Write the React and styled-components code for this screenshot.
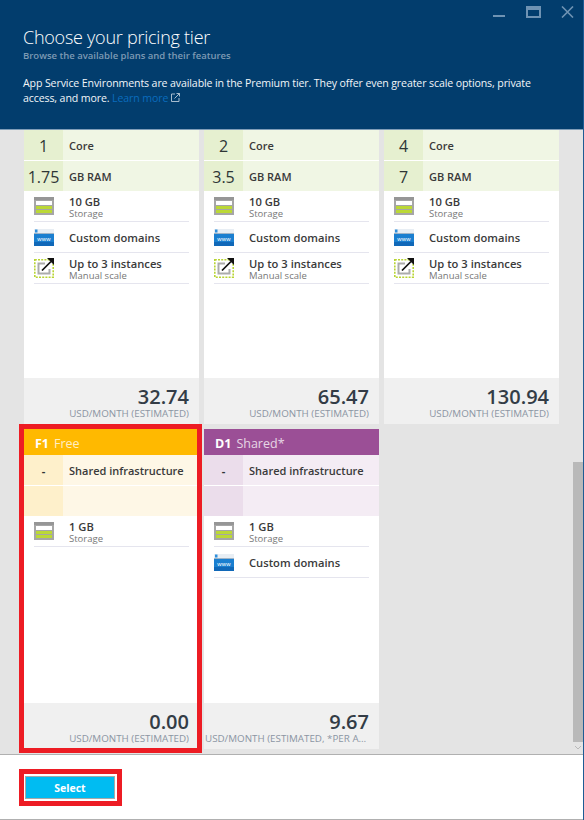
import React from "react";
import styled, { createGlobalStyle } from "styled-components";

const Global = createGlobalStyle`
  html, body { margin: 0; padding: 0; background: #fff; }
  body { font-family: "Open Sans", "Noto Sans", "Liberation Sans", sans-serif; }
  * { box-sizing: border-box; }
`;

const Blade = styled.div`
  width: 584px; height: 820px; display: flex; flex-direction: column; overflow: hidden;
  border-right: 1px solid #1e5c94;
`;
const Header = styled.header`
  position: relative; height: 130px; flex: none; background: #023d6d; padding: 24px 23px 0; color: #fff;
  border-bottom: 1px solid #7f9db8;
`;
const Title = styled.h1`
  margin: 0; font-size: 18px; line-height: 26px; font-weight: 300; color: #fff; letter-spacing: -0.25px;
`;
const Subtitle = styled.div`
  font-size: 9.5px; line-height: 12px; color: #7d9ab4; font-weight: 600;
`;
const Intro = styled.p`
  margin: 14px 0 0; font-size: 10.6px; line-height: 14.5px; width: 530px; color: #f2f6f9; letter-spacing: -0.12px;
`;
const LearnMore = styled.a`color: #0a6cbd; text-decoration: none;`;
const Controls = styled.div`
  position: absolute; top: 6px; right: 9px; display: flex; gap: 20px; align-items: flex-start;
`;
const Body = styled.main`
  position: relative; flex: 1; min-height: 0; background: #e4e4e4; overflow: hidden; padding-left: 24px;
`;
const Grid = styled.div`
  display: grid; grid-template-columns: repeat(3, 175px); grid-template-rows: 294px 320px; gap: 5px;
`;
const Card = styled.section`
  position: relative; display: flex; flex-direction: column; background: #fff;
`;
const Highlight = styled.div`
  position: absolute; inset: -5px -3px -4px -5px; border: 5px solid #ed1c24; pointer-events: none;
`;
const TierBar = styled.div`
  height: 26px; background: ${p => p.$bg}; color: #fff; padding: 2px 0 0 11px; display: flex; align-items: center;
  gap: 5px; font-size: 12.5px;
`;
const TierCode = styled.b`font-weight: 700;`;
const TierName = styled.span`opacity: .76;`;
const SpecRow = styled.div`
  display: flex; height: 30px; background: ${p => p.$bg}; margin-bottom: ${p => (p.$gap ? "1px" : 0)};
`;
const SpecValue = styled.div`
  flex: none; width: 39px; background: ${p => p.$bg}; display: flex; align-items: center; justify-content: center;
  font-size: ${p => (p.$big ? "16px" : "11px")}; color: #2e3636; font-weight: ${p => (p.$big ? 500 : 700)};
  padding-top: 1px;
`;
const SpecLabel = styled.div`
  display: flex; align-items: center; padding: 1px 0 0 6px; font-size: 11px; font-weight: 600; color: #3a3a3a;
  white-space: nowrap;
`;
const Features = styled.div`flex: 1; padding: 0 10px;`;
const Feature = styled.div`
  display: flex; align-items: center; height: 31px; border-bottom: 1px solid #e5e5ee;
`;
const FeatureIcon = styled.div`flex: none; width: 35px; display: flex; align-items: center;`;
const FeatureText = styled.div`display: flex; flex-direction: column; padding-top: 1px;`;
const FeatureName = styled.div`font-size: 11.2px; line-height: 13px; font-weight: 600; color: #3a3a3a; white-space: nowrap;`;
const FeatureSub = styled.div`font-size: 9.5px; line-height: 11px; color: #777; white-space: nowrap;`;
const Price = styled.div`
  flex: none; height: 46px; background: #f0f0f0; padding: 7px 10px 0 0; text-align: right; overflow: hidden;
`;
const Amount = styled.div`font-size: 20px; line-height: 24px; font-weight: 600; color: #333c46;`;
const PriceUnit = styled.div`
  font-size: 9.8px; line-height: 12px; margin: -1px 0 0 1px; color: #8b95a3; white-space: nowrap; overflow: hidden;
  text-overflow: ellipsis;
`;
const Scrollbar = styled.div`
  position: absolute; right: 0; top: 332px; width: 10px; height: 280px; background: #b9b9b9;
`;
const ScrollArrow = styled.svg`position: absolute; right: 1px; top: 615px;`;
const Footer = styled.footer`
  flex: none; height: 66px; background: #fff; border-top: 1px solid #b0b0b0; border-bottom: 1px solid #b0b0b0;
  padding: 14px 0 0 19px;
`;
const SelectFrame = styled.div`
  display: inline-flex; border: 5px solid #ed1c24; padding: 2px 2px 2px 1px; background: #fff;
`;
const SelectButton = styled.button`
  width: 90px; height: 23px; background: #00bcf2; border: 1px solid #a8a8a8; color: #fff; font-family: inherit;
  font-size: 10.5px; font-weight: 700; padding: 0;
`;

const StorageIcon = () => (
  <svg width="20" height="18" viewBox="0 0 20 18">
    <rect width="20" height="18" fill="#a6a6a6" />
    <rect width="20" height="3" fill="#969696" />
    <rect x="2" y="4" width="16" height="4" fill="#fff" />
    <rect x="2" y="9" width="16" height="3" fill="#bbd836" />
    <rect x="2" y="13" width="16" height="3" fill="#bbd836" />
  </svg>
);
const DomainIcon = () => (
  <svg width="20" height="18" viewBox="0 0 20 18">
    <rect y="1" width="20" height="17" fill="#1a7fd0" />
    <rect y="14" width="20" height="4" fill="#1068b8" />
    <rect x="0" y="1" width="20" height="4" fill="#e8eef4" />
    <rect y="5" width="20" height="1" fill="#9fb4c6" />
    <rect x="1" y="1.5" width="2.5" height="3" fill="#2f8fdc" />
    <text x="10" y="13" textAnchor="middle" fontSize="6" fontFamily="Liberation Sans, sans-serif" fill="#fff" letterSpacing=".2">www</text>
  </svg>
);
const ScaleIcon = () => (
  <svg width="20" height="20" viewBox="0 0 20 20">
    <rect x="0.8" y="1.8" width="18.4" height="17.4" fill="none" stroke="#b8d432" strokeWidth="1.6" strokeDasharray="2 1.2" />
    <path d="M11 5.5H4.5v10h11V11" fill="none" stroke="#ababab" strokeWidth="2" />
    <path d="M8 12.5L17 3.5" stroke="#111" strokeWidth="1.7" />
    <path d="M13 0h7v7z" fill="#111" />
  </svg>
);

const features = {
  scale: [
    { icon: <StorageIcon />, name: "10 GB", sub: "Storage" },
    { icon: <DomainIcon />, name: "Custom domains" },
    { icon: <ScaleIcon />, name: "Up to 3 instances", sub: "Manual scale" },
  ],
  free: [{ icon: <StorageIcon />, name: "1 GB", sub: "Storage" }],
  shared: [
    { icon: <StorageIcon />, name: "1 GB", sub: "Storage" },
    { icon: <DomainIcon />, name: "Custom domains" },
  ],
};
const green = { left: "#e6f0d0", right: "#f0f6e4" };
const plans = [
  { specs: [["1", "Core"], ["1.75", "GB RAM"]], tone: green, features: features.scale, price: "32.74" },
  { specs: [["2", "Core"], ["3.5", "GB RAM"]], tone: green, features: features.scale, price: "65.47" },
  { specs: [["4", "Core"], ["7", "GB RAM"]], tone: green, features: features.scale, price: "130.94" },
  { code: "F1", name: "Free", bar: "#ffb900", specs: [["-", "Shared infrastructure"], ["", ""]], tone: { left: "#fef0cb", right: "#fef7e6" }, features: features.free, price: "0.00", highlight: true },
  { code: "D1", name: "Shared*", bar: "#9b4f96", specs: [["-", "Shared infrastructure"], ["", ""]], tone: { left: "#ebddeb", right: "#f4ecf4" }, features: features.shared, price: "9.67", unit: "USD/MONTH (ESTIMATED, *PER APP)" },
];

export default function App() {
  return (
    <Blade>
      <Global />
      <Header>
        <Controls>
          <svg width="14" height="12" viewBox="0 0 14 12"><rect x="1" y="9" width="12" height="2" fill="#6f93b3" /></svg>
          <svg width="15" height="12" viewBox="0 0 15 12"><path d="M0 0h15v12H0z M2 4v6h11V4z" fill="#6f93b3" fillRule="evenodd" /></svg>
          <svg width="13" height="12" viewBox="0 0 13 12"><path d="M1 .5l11 11M12 .5l-11 11" stroke="#6f93b3" strokeWidth="1.6" /></svg>
        </Controls>
        <Title>Choose your pricing tier</Title>
        <Subtitle>Browse the available plans and their features</Subtitle>
        <Intro>
          App Service Environments are available in the Premium tier. They offer even greater scale options, private access, and more.{" "}
          <LearnMore>Learn more</LearnMore>{" "}
          <svg width="9" height="9" viewBox="0 0 9 9"><path d="M4 1H.5v7.5H8V5M3.5 5.5L8.5.5M5.5.5h3v3" fill="none" stroke="#b9c9d8" strokeWidth=".9" /></svg>
        </Intro>
      </Header>
      <Body>
        <Grid>
          {plans.map((plan, i) => (
            <Card key={i}>
              {plan.bar && (
                <TierBar $bg={plan.bar}>
                  <TierCode>{plan.code}</TierCode>
                  <TierName>{plan.name}</TierName>
                </TierBar>
              )}
              {plan.specs.map(([value, label], j) => (
                <SpecRow key={j} $bg={plan.tone.right} $gap={j === 0}>
                  <SpecValue $bg={plan.tone.left} $big={value !== "-"}>{value}</SpecValue>
                  <SpecLabel>{label}</SpecLabel>
                </SpecRow>
              ))}
              <Features>
                {plan.features.map((f, k) => (
                  <Feature key={k}>
                    <FeatureIcon>{f.icon}</FeatureIcon>
                    <FeatureText>
                      <FeatureName>{f.name}</FeatureName>
                      {f.sub && <FeatureSub>{f.sub}</FeatureSub>}
                    </FeatureText>
                  </Feature>
                ))}
              </Features>
              <Price>
                <Amount>{plan.price}</Amount>
                <PriceUnit>{plan.unit || "USD/MONTH (ESTIMATED)"}</PriceUnit>
              </Price>
              {plan.highlight && <Highlight />}
            </Card>
          ))}
        </Grid>
        <Scrollbar />
        <ScrollArrow width="8" height="6" viewBox="0 0 8 6"><path d="M1 1l3 3 3-3" fill="none" stroke="#b9b9b9" /></ScrollArrow>
      </Body>
      <Footer>
        <SelectFrame>
          <SelectButton>Select</SelectButton>
        </SelectFrame>
      </Footer>
    </Blade>
  );
}
